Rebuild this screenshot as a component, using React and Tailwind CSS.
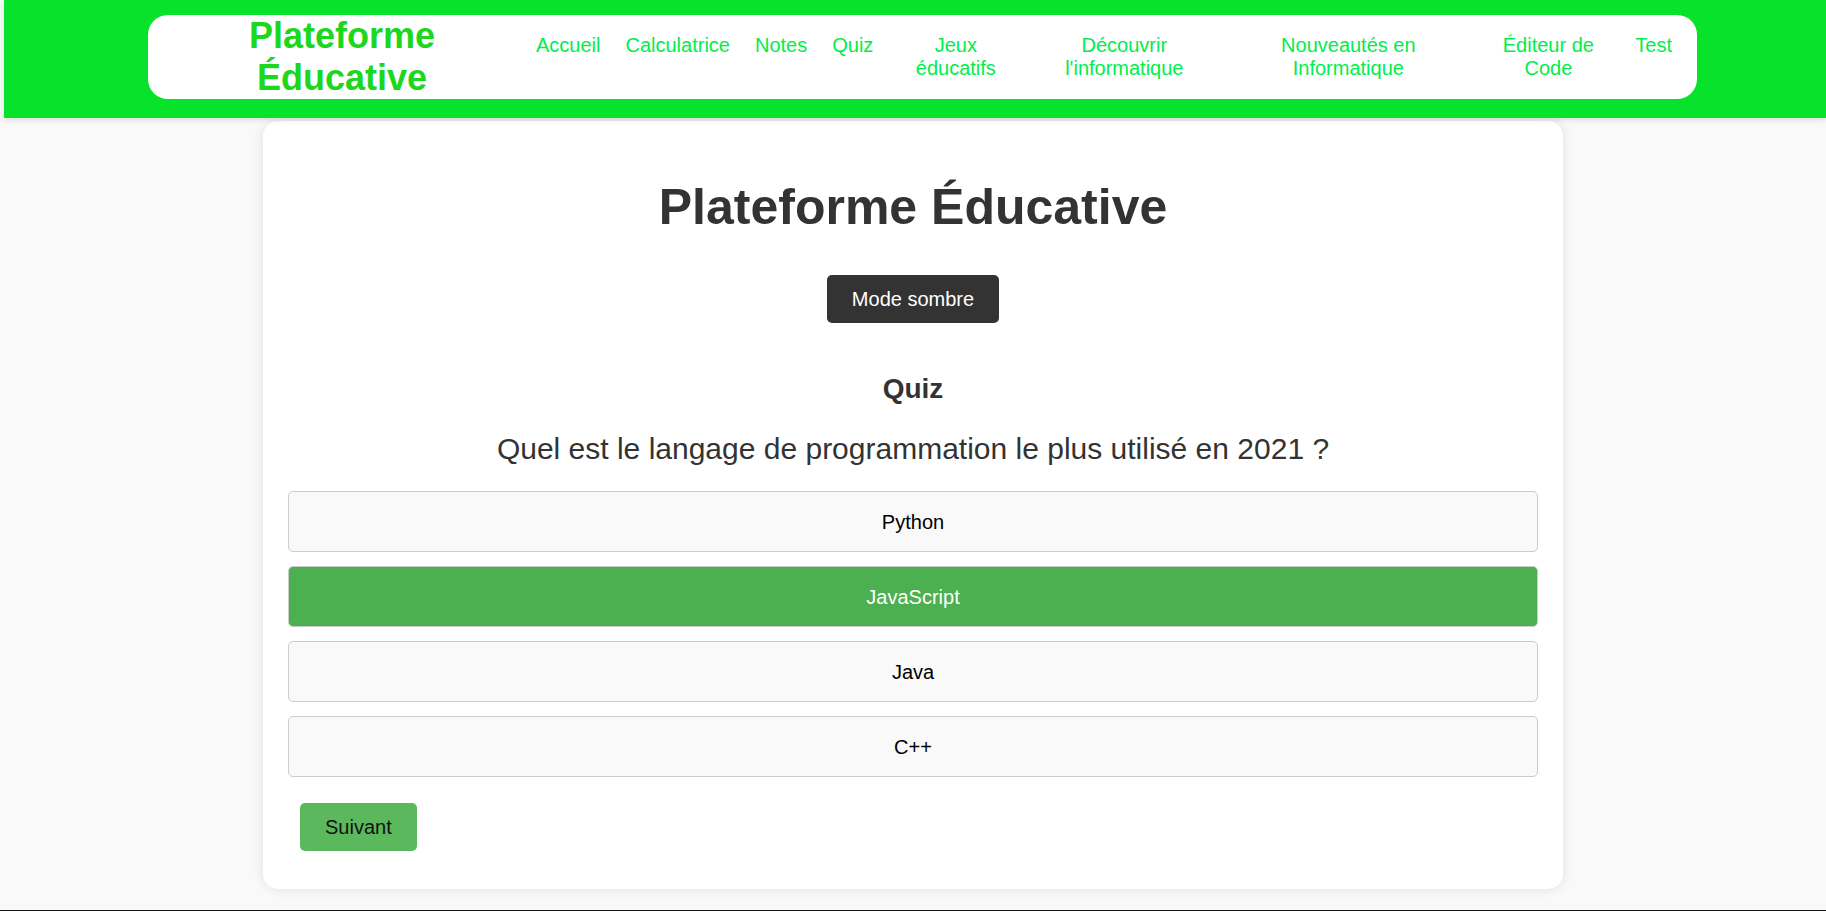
import { useState } from 'react';

const navLinks = [
  { label: 'Accueil' },
  { label: 'Calculatrice' },
  { label: 'Notes' },
  { label: 'Quiz' },
  { label: 'Jeux éducatifs', w: 'w-[115px]' },
  { label: "Découvrir l'informatique", w: 'w-[172px]' },
  { label: 'Nouveautés en Informatique', w: 'w-[226px]' },
  { label: 'Éditeur de Code', w: 'w-[124px]' },
  { label: 'Test' },
];

const options = ['Python', 'JavaScript', 'Java', 'C++'];

function Header() {
  return (
    <header className="ml-[4px] h-[118px] bg-[#07e32a] pt-[15px] shadow-[0_2px_5px_rgba(0,0,0,0.12)] relative z-10">
      <div className="ml-[144px] w-[1549px] h-[84px] bg-white rounded-[20px] flex items-center pl-[44px]">
        <div className="w-[300px] text-center text-[36px] leading-[42px] font-bold text-[#1cd71c]">
          Plateforme Éducative
        </div>
        <nav className="ml-[44px] flex items-start gap-[25px]">
          {navLinks.map((l) => (
            <a key={l.label} href="#"
              className={`${l.w || 'shrink-0'} text-center text-[20px] leading-[23px] text-[#00ee4a]`}>
              {l.label}
            </a>
          ))}
        </nav>
      </div>
    </header>
  );
}

function Quiz() {
  const [selected, setSelected] = useState('JavaScript');

  return (
    <div>
      <h2 className="mt-[50px] text-center text-[28px] leading-[32px] font-bold text-[#333]">Quiz</h2>
      <p className="mt-[27px] text-center text-[30px] leading-[34px] text-[#333]">
        Quel est le langage de programmation le plus utilisé en 2021 ?
      </p>
      <div className="mt-[25px] flex flex-col gap-[14px]">
        {options.map((opt) => (
          <button key={opt} onClick={() => setSelected(opt)}
            className={`h-[61px] w-full rounded-[5px] border border-[#ccc] text-[20px] ${
              selected === opt ? 'bg-[#4caf50] text-white' : 'bg-[#f9f9f9] text-black'
            }`}>
            {opt}
          </button>
        ))}
      </div>
      <button className="mt-[26px] ml-[12px] h-[48px] px-[25px] rounded-[5px] bg-[#5cb85c] text-[20px] text-[#111]">
        Suivant
      </button>
    </div>
  );
}

export default function App() {
  return (
    <div className="min-h-screen bg-[#f9f9f9] font-['Liberation_Sans',Arial,sans-serif] overflow-hidden">
      <Header />
      <main className="mt-[3px] mx-auto w-[1300px] bg-white rounded-[15px] shadow-[0_0_12px_rgba(0,0,0,0.1)] px-[25px] pt-[25px] pb-[38px]">
        <h1 className="mt-[33px] text-center text-[50px] leading-[57px] font-bold text-[#333]">
          Plateforme Éducative
        </h1>
        <div className="mt-[39px] flex justify-center">
          <button className="h-[48px] px-[25px] rounded-[5px] bg-[#333] text-white text-[20px]">
            Mode sombre
          </button>
        </div>
        <Quiz />
      </main>
      <footer className="mt-[21px] h-[60px] bg-[#10131c]" />
    </div>
  );
}
